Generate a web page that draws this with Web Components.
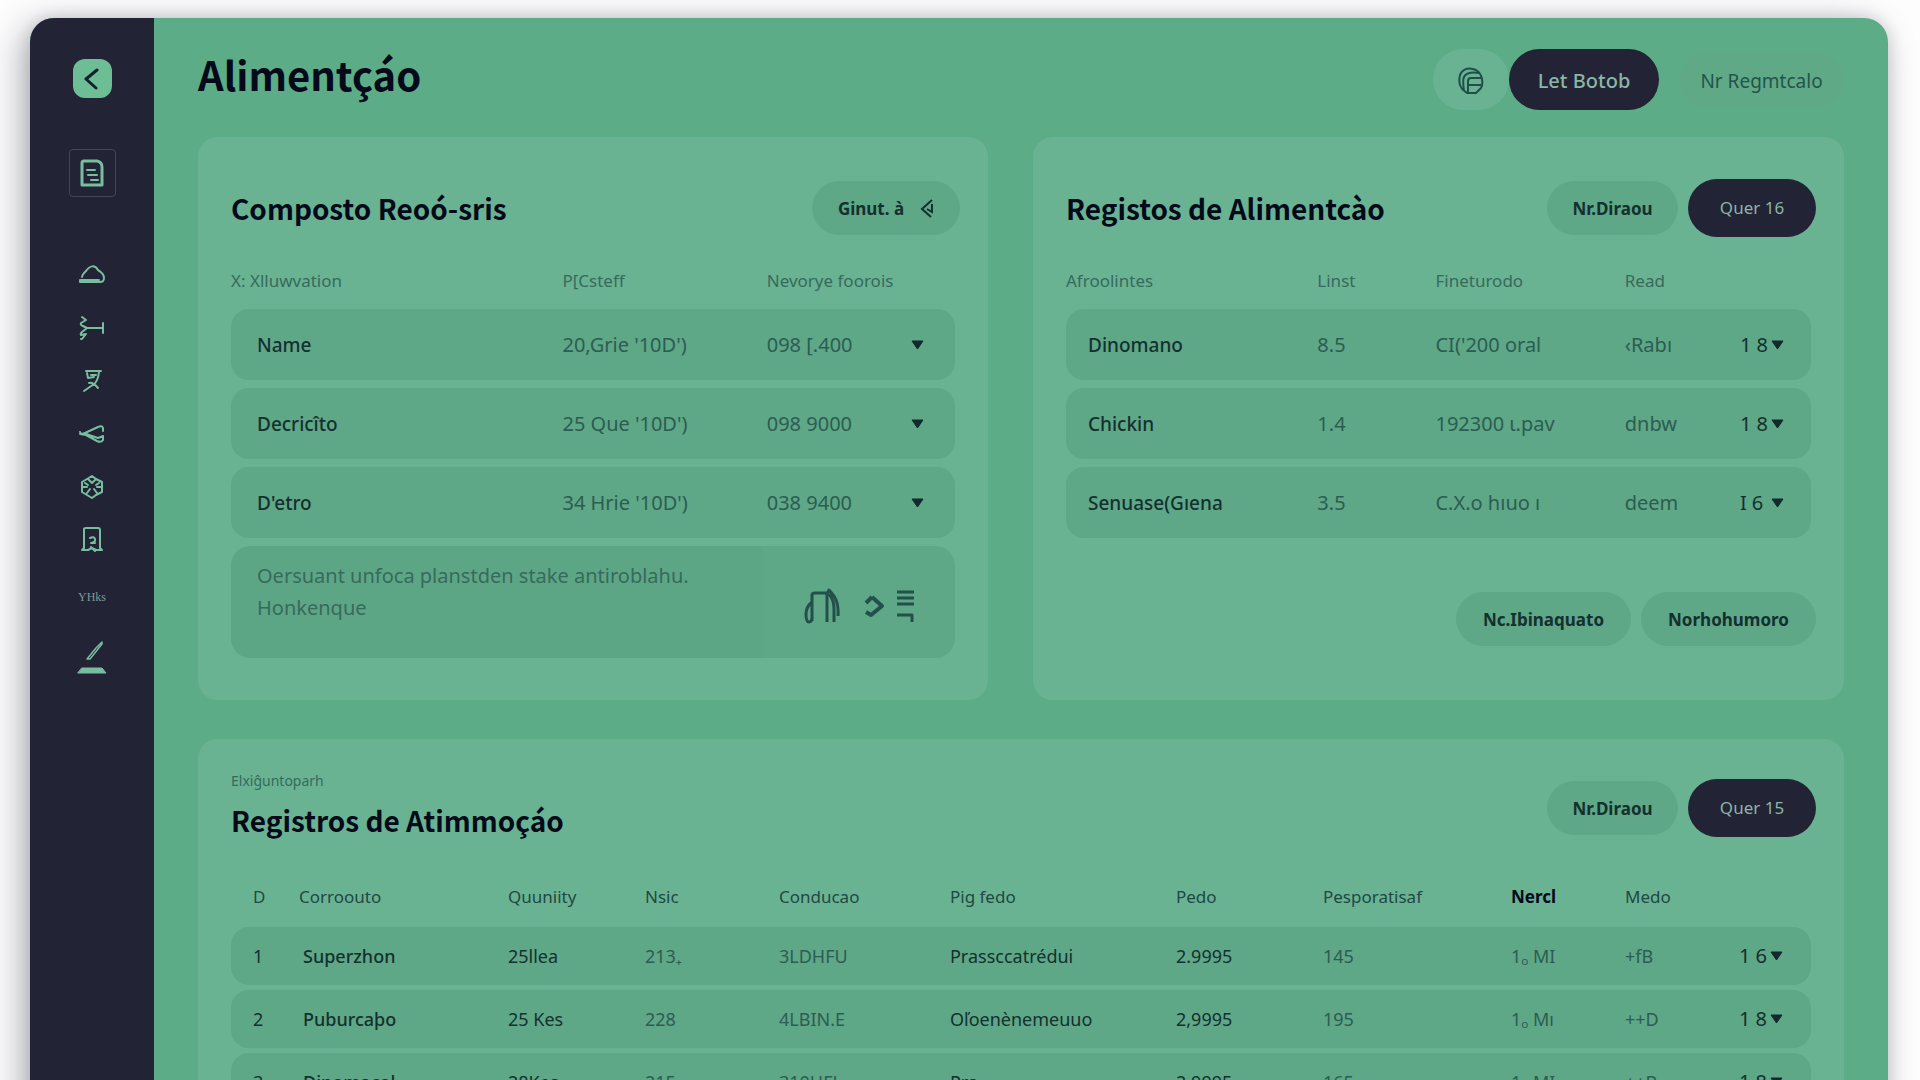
<!DOCTYPE html>
<html lang="pt">
<head>
<meta charset="utf-8">
<title>Alimentação</title>
<style>
  html { height: 100%; }
  body {
    margin: 0; height: 100vh; overflow: hidden; background: #fdfdfe;
    font-family: "Noto Sans", "Liberation Sans", sans-serif; color: #122b2f;
    --main: #5cad87; --card: #69b393; --row: #5ea787; --ink: #222335;
    --title: #05091a; --text: #14302f; --soft: #2c5d52; --mute: #376a5c; --mint: #79bd9f;
    --display: "Noto Sans CJK JP", "Noto Sans", sans-serif;
  }
</style>
</head>
<body>
<app-window>
  <side-nav slot="nav"></side-nav>
  <page-header heading="Alimentçáo">
    <pill-button kind="icon" label="Ficheiros"><svg width="26" height="28" viewBox="0 0 26 28" fill="none" stroke="#1f4f48" stroke-width="2"><path d="M4 22C1 18 1 12 2 8 5 1 12 0 18 3M6 24C5 17 5 12 6 10 8 6 14 5 21 6M10 26V14q0-3 3-3h10M10 18h14M18 3q5 3 6 9t-1 9l-5 5H9l-5-4"/></svg></pill-button>
    <pill-button kind="dark large">Let Botob</pill-button>
    <pill-button kind="quiet">Nr Regmtcalo</pill-button>
  </page-header>
  <card-grid>
    <panel-card heading="Composto Reoó-sris">
      <pill-button slot="actions" kind="roomy">Ginut. à <svg width="14" height="20" viewBox="0 0 14 20" fill="none" stroke="#14302f" stroke-width="2"><path d="M12 1 2 10l9 8M12 5v8l-5-3"/></svg></pill-button>
      <data-table name="compostos"></data-table>
      <note-box></note-box>
    </panel-card>
    <panel-card heading="Registos de Alimentcào">
      <pill-button slot="actions">Nr.Diraou</pill-button>
      <pill-button slot="actions" kind="dark">Quer 16</pill-button>
      <data-table name="registos"></data-table>
      <pill-button slot="footer" kind="wide">Nc.Ibinaquato</pill-button>
      <pill-button slot="footer" kind="wide">Norhohumoro</pill-button>
    </panel-card>
    <panel-card class="full" heading="Registros de Atimmoçáo" eyebrow="Elxiĝuntoparh">
      <pill-button slot="actions">Nr.Diraou</pill-button>
      <pill-button slot="actions" kind="dark">Quer 15</pill-button>
      <data-table name="historico"></data-table>
    </panel-card>
  </card-grid>
</app-window>

<script>
const define = (name, render) => customElements.define(name, class extends HTMLElement {
  constructor() { super(); this.attachShadow({ mode: 'open' }); }
  connectedCallback() { this.shadowRoot.innerHTML = render(this); }
});

define('app-window', () => `
<style>
  :host { display: flex; box-sizing: border-box; min-height: 100vh; margin: 18px 32px 0 30px;
    border-radius: 24px; background: var(--main); box-shadow: -8px 8px 36px rgba(20,22,34,.32), 0 0 16px rgba(20,22,34,.14); }
  ::slotted(side-nav) { flex: none; }
  main { flex: 1; min-width: 0; padding: 0 44px; }
</style>
<slot name="nav"></slot><main><slot></slot></main>`);

define('side-nav', () => `
<style>
  :host { display: block; width: 124px; box-sizing: border-box; padding-top: 41px; background: var(--ink);
    border-radius: 24px 0 0 0; }
  nav { display: flex; flex-direction: column; align-items: center; }
  a { display: flex; align-items: center; justify-content: center; width: 48px; height: 53px; color: var(--mint);
    text-decoration: none; }
  svg { fill: none; stroke: currentColor; stroke-width: 2; stroke-linejoin: round; stroke-linecap: round; }
  .logo { width: 39px; height: 39px; border-radius: 12px; background: #6dbd95; color: #14212d; }
  .current { box-sizing: border-box; width: 47px; height: 48px; margin: 51px 0; border: 1px solid #444557; border-radius: 4px; }
  .tag { height: 61px; font: 12px/20px "Liberation Serif", serif; color: #7e9a97; }
  .last { height: 59px; }
</style>
<nav aria-label="Principal">
  <a class="logo" href="#" aria-label="Voltar"><svg width="20" height="22" viewBox="0 0 20 22" style="stroke-width:3"><path d="M15 2 4 11l10 9"/></svg></a>
  <a class="current" href="#" aria-label="Registos"><svg width="24" height="28" viewBox="0 0 24 28" style="stroke-width:3"><path d="M2 4q0-2 2-2h13q5 1 5 6v18H2z"/><path d="M7 11h8M8 16h9M11 21h7" stroke-width="2"/></svg></a>
  <a href="#" aria-label="Nuvem"><svg width="28" height="20" viewBox="0 0 28 20"><path d="M4 12C4 9 6 8 8 6c4-6 9-6 12-1 2 2 6 3 6 8 0 3-2 4-4 4H2v-2h19"/></svg></a>
  <a href="#" aria-label="Ligações"><svg width="28" height="26" viewBox="0 0 28 26"><path d="m4 2 4 3-5 3q-1 2 2 3l4 2-5 4q-2 2-1 3l5-1-4 5H3M9 13h16M25 8v10"/></svg></a>
  <a href="#" aria-label="Receitas"><svg width="24" height="26" viewBox="0 0 24 26"><path d="M6 3h15M7 5l1 5 6-1M19 4q-1 9-5 12L4 23M9 15q4-1 9 5M11 7h5"/></svg></a>
  <a href="#" aria-label="Partilhar"><svg width="28" height="20" viewBox="0 0 28 20"><path d="M2 8q1 3 5 1L20 3q4-2 5 1v3M8 10l12 4q3-1 5-2v4q-2 3-6 1L8 11 2 10"/></svg></a>
  <a href="#" aria-label="Componentes"><svg width="26" height="26" viewBox="0 0 26 26"><path d="m13 2 4 3 6 3v10l-6 3-4 3-5-3-5-3V8l5-3zM9 5l4 4 4-4M3 13h5M18 13h5M8 19l3-4M18 19l-3-4M6 9l3 2M20 9l-3 2"/></svg></a>
  <a href="#" aria-label="Documento"><svg width="24" height="28" viewBox="0 0 24 28"><path d="M4 3q0-1 2-1h12q2 0 2 2v18l2 2h-6l-4-2-4 2H2l2-2zM10 12q4-2 5 1t-4 4h4M11 21l4 4"/></svg></a>
  <a class="tag" href="#">YHks</a>
  <a class="last" href="#" aria-label="Editar"><svg width="30" height="34" viewBox="0 0 30 34"><path d="m25 2-6 6-9 11 3 0 8-10 4-5z" stroke-width="1.500"/><path d="M5 28h20l4 5H1z" fill="currentColor" stroke-width="1"/></svg></a>
</nav>`);

define('page-header', el => `
<style>
  :host { display: flex; align-items: center; justify-content: space-between; padding: 31px 0 27px; }
  h1 { margin: 0; padding-bottom: 5px; font: 700 40px/51px var(--display); color: var(--title); align-self: flex-start; }
  div { display: flex; align-items: center; }
  ::slotted([kind=quiet]) { margin-left: 20px; }
</style>
<h1>${el.getAttribute('heading')}</h1><div><slot></slot></div>`);

define('pill-button', el => `
<style>
  :host { display: block; }
  button { display: flex; align-items: center; justify-content: center; gap: 16px; height: 54px; min-width: 131px; margin: 0;
    padding: 2px 24px 0; border: 0; border-radius: 27px; background: var(--row); color: var(--text);
    font: 700 17px/24px "Noto Sans", sans-serif; white-space: nowrap; cursor: pointer; }
  :host([kind~=dark]) button { height: 58px; min-width: 128px; padding: 0 24px; border-radius: 29px; background: var(--ink);
    color: #8bb5a6; font-weight: 400; }
  :host([kind~=large]) button { height: 61px; min-width: 150px; padding-top: 2px; border-radius: 31px; font-size: 20px; font-weight: 500; }
  :host([kind=icon]) button { width: 76px; min-width: 0; height: 61px; border-radius: 31px; background: var(--card); }
  :host([kind=quiet]) button { min-width: 165px; padding: 2px 20px 0; background: #5fa987; color: #24544b; font-size: 19px; font-weight: 400; }
  :host([kind=wide]) button { min-width: 175px; }
  :host([kind=roomy]) button { min-width: 148px; }
</style>
<button type="button"${el.hasAttribute('label') ? ` aria-label="${el.getAttribute('label')}"` : ''}><slot></slot></button>`);

define('card-grid', () => `
<style>
  :host { display: grid; grid-template-columns: minmax(0, 790fr) minmax(0, 811fr); gap: 39px 45px; }
  ::slotted(.full) { grid-column: 1 / -1; }
</style><slot></slot>`);

define('panel-card', el => {
  const eyebrow = el.getAttribute('eyebrow');
  return `
<style>
  :host { display: block; box-sizing: border-box; padding: 42px 28px 42px 33px; border-radius: 20px; background: var(--card); }
  :host([eyebrow]) { padding-top: 30px; }
  header { display: flex; align-items: center; justify-content: space-between; min-height: 58px; margin-bottom: 16px; }
  :host([eyebrow]) header { margin-bottom: 20px; }
  h2 { margin: 0; font: 700 28px/54px var(--display); color: var(--title); }
  p { margin: 0; font-size: 14px; line-height: 24px; color: var(--mute); }
  .actions, footer { display: flex; align-items: center; gap: 10px; }
  .body { margin-right: 5px; }
  footer { justify-content: flex-end; margin-top: 46px; }
</style>
<header><div>${eyebrow ? `<p>${eyebrow}</p>` : ''}<h2>${el.getAttribute('heading')}</h2></div>
<div class="actions"><slot name="actions"></slot></div></header>
<div class="body"><slot></slot></div>
${el.querySelector('[slot=footer]') ? '<footer><slot name="footer"></slot></footer>' : ''}`;
});

const tables = {
  compostos: {
    widths: [331, 204, 136, 52], strong: [0], indent: 26,
    head: ['X: Xlluwvation', 'P[Csteff', 'Nevorye foorois', ''],
    rows: [['Name', "20,Grie '10D')", '098 [.400', 'menu'], ['Decricîto', "25 Que '10D')", '098 9000', 'menu'],
           ["D'etro", "34 Hrie '10D')", '038 9400', 'menu']]
  },
  registos: {
    widths: [251, 118, 189, 115, 71], strong: [0], indent: 22,
    head: ['Afroolintes', 'Linst', 'Fineturodo', 'Read', ''],
    rows: [['Dinomano', '8.5', "CI('200 oral", '‹Rabı', '=1 8'], ['Chickin', '1.4', '192300 ι.pav', 'dnbw', '=1 8'],
           ['Senuase(Gıena', '3.5', 'C.X.o hıuo ı', 'deem', '=I 6']]
  },
  historico: {
    widths: [68, 209, 137, 134, 171, 226, 147, 188, 114, 114, 72], strong: [0, 1, 2, 5, 6], indent: 22, compact: true,
    head: ['D', 'Corroouto', 'Quuniity', 'Nsic', 'Conducao', 'Pig fedo', 'Pedo', 'Pesporatisaf', '*Nercl', 'Medo', ''],
    rows: [['1', 'Superzhon', '25llea', '213₊', '3LDHFU', 'Prassccatrédui', '2.9995', '145', '1ₒ MI', '+fB', '=1 6'],
           ['2', 'Puburcaþo', '25 Kes', '228', '4LBIN.E', 'Oľoenènemeuuo', '2,9995', '195', '1ₒ Mı', '++D', '=1 8'],
           ['3', 'Dinomacol', '28Kea', '215', '310HFL', 'Pra', '2.9995', '165', '1ₒ MI', '++B', '=1 8']]
  }
};
const caret = '<svg width="13" height="10" viewBox="0 0 13 10"><path d="M1 1h11L6.500 9z" fill="#12292d" stroke="#12292d" stroke-linejoin="round"/></svg>';
const cell = v => v === 'menu' ? `<button type="button" aria-label="Abrir menu">${caret}</button>`
  : v[0] === '=' ? `<label><select aria-label="Quantidade"><option>${v.slice(1)}</option></select>${caret}</label>` : v;

define('data-table', el => {
  const t = tables[el.getAttribute('name')];
  const total = t.widths.reduce((a, b) => a + b);
  return `
<style>
  :host { display: block; }
  table { width: 100%; table-layout: fixed; border-collapse: separate; border-spacing: 0 ${t.compact ? 5 : 8}px; }
  th, td { padding: 0; text-align: left; white-space: nowrap; }
  th { height: ${t.compact ? 50 : 40}px; font-size: 17px; line-height: 24px; font-weight: 400; color: ${t.compact ? '#1f4843' : 'var(--mute)'}; }
  th.bold { font-weight: 700; color: var(--title); }
  td { height: ${t.compact ? 58 : 71}px; background: var(--row); font-size: ${t.compact ? 18 : 20}px; line-height: 28px; color: var(--soft); }
  td.strong { color: var(--text); font-weight: ${t.compact ? 400 : 500}; font-size: ${t.compact ? 18 : 19}px; }
  td:first-child { padding-left: ${t.indent}px; border-radius: 18px 0 0 18px; }
  ${t.compact ? 'th:first-child { padding-left: 22px; } td:nth-child(2) { padding-left: 4px; font-weight: 500; }' : ''}
  td:last-child { border-radius: 0 18px 18px 0; }
  button { display: flex; margin: 0; padding: 8px; border: 0; background: none; }
  label { display: flex; align-items: center; gap: 2px; }
  select { appearance: none; width: 29px; margin: 0; padding: 0; border: 0; background: none; color: var(--text);
    font: 400 20px/28px "Noto Sans", sans-serif; }
</style>
<table>
  <colgroup>${t.widths.map(w => `<col style="width:${w / total * 100}%">`).join('')}</colgroup>
  <thead><tr>${t.head.map(h => h[0] === '*' ? `<th class="bold">${h.slice(1)}</th>` : `<th>${h}</th>`).join('')}</tr></thead>
  <tbody>${t.rows.map(r => `<tr>${r.map((v, i) => `<td${t.strong.includes(i) ? ' class="strong"' : ''}>${cell(v)}</td>`).join('')}</tr>`).join('')}</tbody>
</table>`;
});

define('note-box', () => `
<style>
  :host { display: grid; grid-template-columns: minmax(0, 531fr) minmax(0, 192fr); height: 112px; border-radius: 20px;
    overflow: hidden; background: var(--row); }
  p { margin: 0; padding: 14px 26px; font-size: 20px; line-height: 32px; color: var(--mute);
    background: #5da685; white-space: nowrap; }
  div { display: flex; align-items: center; justify-content: center; gap: 12px; padding-top: 8px; }
  button { display: flex; margin: 0; padding: 0; border: 0; background: none; }
  button:first-child { margin-right: 12px; }
  svg { fill: none; stroke: #23504a; stroke-width: 3; stroke-linejoin: round; }
</style>
<p>Oersuant unfoca planstden stake antiroblahu.<br>Honkenque</p>
<div>
  <button type="button" aria-label="Anexar"><svg width="36" height="36" viewBox="0 0 36 36"><path d="M8 33V7q0-2 3-2h12M8 14q-6 5-6 12 0 8 3 8 3 0 3-5M23 34V6l2-4 5 6q5 8 4 20M25 6q5 6 5 14v14"/></svg></button>
  <button type="button" aria-label="Enviar"><svg width="21" height="24" viewBox="0 0 21 24" style="stroke-width:4"><path d="m2 9 6-6M8 3l10 9-11 9-5-3"/></svg></button>
  <button type="button" aria-label="Opções"><svg width="17" height="32" viewBox="0 0 17 32"><path d="M0 2h17M0 8h17M0 14h17M0 25h15v7"/></svg></button>
</div>`);
</script>
</body>
</html>
